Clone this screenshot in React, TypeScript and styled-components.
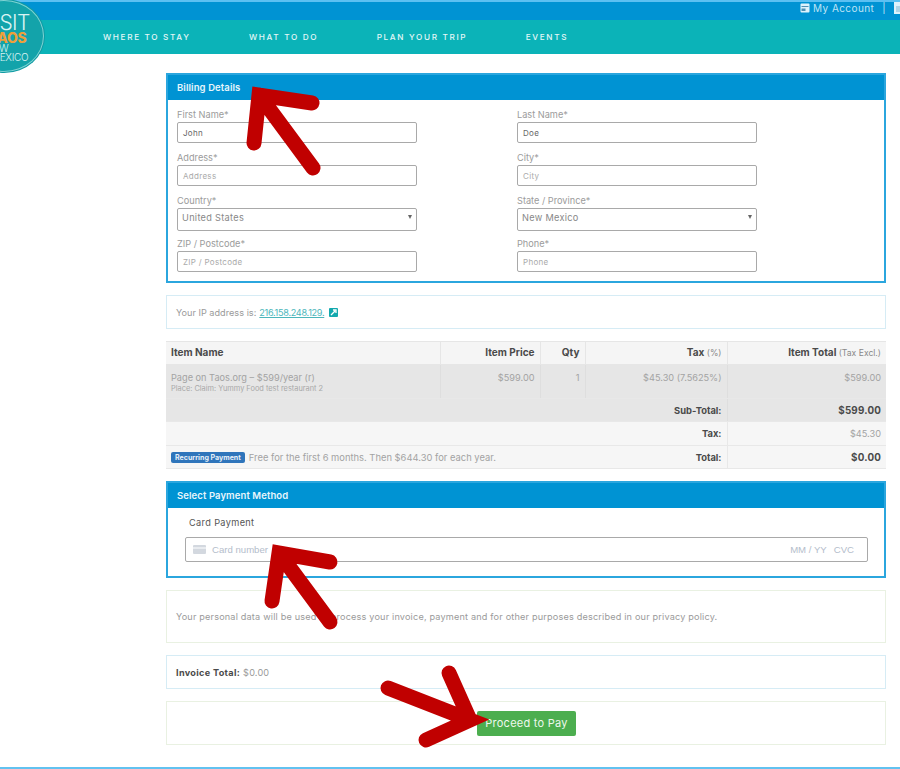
import React from "react";
import styled, { createGlobalStyle } from "styled-components";

const GlobalStyle = createGlobalStyle`
  html, body {
    margin: 0;
    padding: 0;
    background: #fff;
    overflow: hidden;
  }
  * { box-sizing: border-box; }
  body {
    font-family: "Inter", "Open Sans", sans-serif;
    color: #999;
  }
`;

const Page = styled.div`
  position: relative;
  width: 900px;
  height: 769px;
  overflow: hidden;
  display: flex;
  flex-direction: column;
`;

const TopBar = styled.div`
  height: 20px;
  flex: none;
  background: #0093d3;
  border-top: 2px solid #5cc0f2;
  display: flex;
  justify-content: flex-end;
  align-items: flex-start;
  gap: 8px;
  margin-right: -4px;
  color: #bfe4f5;
  font-size: 10px;
  line-height: 12px;
  letter-spacing: 0.42px;
`;

const AccountLink = styled.span`
  display: flex;
  align-items: center;
  gap: 3px;
`;

const NavBar = styled.nav`
  height: 34px;
  flex: none;
  background: #0bb3b8;
  display: flex;
  align-items: center;
  gap: 58.5px;
  padding-left: 103px;
`;

const NavItem = styled.a`
  color: #e4f7f7;
  font-size: 8.2px;
  font-weight: 500;
  letter-spacing: 1.65px;
  white-space: nowrap;
`;

const Logo = styled.div`
  position: absolute;
  left: -36px;
  top: 0;
  width: 80px;
  height: 72px;
  border-radius: 50%;
  background: #13a3aa;
  border: 1px solid #7fd3d3;
  box-shadow: 0 0 0 1px #0f9aa3;
  color: #d9f3f3;
  padding: 12px 0 0 16px;
  display: flex;
  flex-direction: column;
  font-weight: 300;
`;

const LogoVisit = styled.span`
  font-size: 21px;
  line-height: 19px;
  letter-spacing: -0.6px;
`;

const LogoTaos = styled.span`
  font-size: 14px;
  line-height: 12px;
  font-weight: 800;
  letter-spacing: -0.2px;
  color: #eea03a;
  margin-left: 8px;
`;

const LogoSmall = styled.span<{ $indent: number }>`
  font-size: 10px;
  line-height: 8.5px;
  letter-spacing: -0.3px;
  margin-left: ${(p) => p.$indent}px;
`;

const Main = styled.main`
  width: 720px;
  margin: 19px 0 0 166px;
  display: flex;
  flex-direction: column;
  gap: 12px;
`;

const Panel = styled.section<{ $height: number }>`
  height: ${(p) => p.$height}px;
  border: 2px solid #2ba6de;
  display: flex;
  flex-direction: column;
`;

const PanelHeader = styled.h2`
  margin: 0;
  height: 25px;
  flex: none;
  background: #0093d3;
  color: #e8f6fc;
  font-size: 9.5px;
  font-weight: 600;
  line-height: 25px;
  padding-left: 9px;
  letter-spacing: 0.1px;
`;

const FieldGrid = styled.div`
  display: grid;
  grid-template-columns: 240px 240px;
  column-gap: 100px;
  padding: 8px 0 0 9px;
`;

const Field = styled.label`
  display: flex;
  flex-direction: column;
  height: 43px;
`;

const FieldLabel = styled.span`
  font-size: 9.2px;
  line-height: 13px;
  color: #9b9b9b;
`;

const InputBox = styled.span<{ $filled?: boolean; $select?: boolean }>`
  position: relative;
  height: ${(p) => (p.$select ? 23 : 21)}px;
  margin-top: 1px;
  border: 1px solid #a9a9a9;
  border-radius: 2px;
  background: #fff;
  padding-left: ${(p) => (p.$select ? 4 : 5)}px;
  padding-bottom: ${(p) => (p.$select ? 5 : 0)}px;
  display: flex;
  align-items: center;
  color: ${(p) => (p.$select ? "#888" : p.$filled ? "#666" : "#aaa")};
  font-size: ${(p) => (p.$select ? 9.2 : 8)}px;
  letter-spacing: 0.3px;
`;

const Caret = styled.i`
  position: absolute;
  right: 4px;
  top: 6px;
  border-left: 2.5px solid transparent;
  border-right: 2.5px solid transparent;
  border-top: 4px solid #666;
`;

const InfoBox = styled.div<{ $height: number; $tone: "blue" | "green" }>`
  height: ${(p) => p.$height}px;
  border: 1px solid ${(p) => (p.$tone === "blue" ? "#d6ecf5" : "#e9f1e2")};
  display: flex;
  align-items: center;
  padding-left: 9px;
  font-size: 9.15px;
  letter-spacing: 0.18px;
  color: #9a9a9a;
`;

const IpLabel = styled.span`
  letter-spacing: 0.02px;
`;

const IpLink = styled.a`
  color: #4cb6bb;
  text-decoration: underline;
  margin: 0 5px 0 3px;
  letter-spacing: -0.3px;
`;

const ExternalIcon = styled.svg`
  width: 9px;
  height: 9px;
  flex: none;
`;

const Invoice = styled.table`
  width: 100%;
  border-collapse: collapse;
  table-layout: fixed;
  font-size: 9.2px;
  color: #a0a0a0;
`;

const HeadCell = styled.th<{ $right?: boolean }>`
  height: 23px;
  padding: 0 5px 2px;
  background: #f5f5f5;
  border: 1px solid #e6e6e6;
  border-width: 1px 1px 1px 0;
  text-align: ${(p) => (p.$right ? "right" : "left")};
  color: #4a4a4a;
  font-weight: 700;
  font-size: 10px;
  &:first-child { border-left: 0; }
  &:last-child { border-right: 0; }
`;

const HeadNote = styled.span`
  font-weight: 400;
  color: #888;
  font-size: 8.6px;
`;

const Cell = styled.td<{ $right?: boolean; $shade?: boolean; $bold?: boolean; $top?: boolean; $open?: boolean }>`
  padding: ${(p) => (p.$top ? "7px 5px 0" : "0 5px")};
  vertical-align: ${(p) => (p.$top ? "top" : "middle")};
  text-align: ${(p) => (p.$right ? "right" : "left")};
  background: ${(p) => (p.$shade ? "#e6e6e6" : "#f6f6f6")};
  border-bottom: 1px solid #e8e8e8;
  border-right: 1px solid ${(p) => (p.$open ? "transparent" : p.$shade ? "#dedede" : "#e8e8e8")};
  color: ${(p) => (p.$bold ? "#4a4a4a" : "#a3a3a3")};
  font-weight: ${(p) => (p.$bold ? 700 : 400)};
  font-size: ${(p) => (p.$bold ? 9.4 : 9.2)}px;
  &:last-child { border-right: 0; }
`;

const SumValue = styled.span`
  font-size: 9.8px;
  letter-spacing: 0.2px;
`;

const ItemRow = styled.tr`
  height: 34px;
`;

const SumRow = styled.tr<{ $height: number }>`
  height: ${(p) => p.$height}px;
`;

const ItemSub = styled.div`
  font-size: 7.4px;
  margin-top: 1px;
  color: #a8a8a8;
`;

const RecurringBadge = styled.span`
  display: inline-block;
  background: #2f75bb;
  color: #e6eff8;
  border-radius: 2px;
  font-size: 7.05px;
  font-weight: 700;
  line-height: 11px;
  padding: 0 4px;
  margin-right: 4px;
  vertical-align: 1px;
`;

const RecurringNote = styled.span`
  font-size: 9.4px;
`;

const CardTitle = styled.div`
  font-size: 9.2px;
  line-height: 13px;
  color: #555;
  letter-spacing: 0.35px;
  margin: 8px 0 0 21px;
`;

const CardInput = styled.div`
  width: 683px;
  height: 25px;
  margin: 8px 0 0 17px;
  border: 1px solid #a9a9a9;
  border-radius: 2px;
  display: flex;
  align-items: center;
  padding: 0 13px 0 7px;
  font-family: "Liberation Sans", Arial, sans-serif;
  font-size: 9.6px;
  color: #b4bdcb;
`;

const CardIcon = styled.svg`
  width: 13px;
  height: 9px;
  margin-right: 6px;
`;

const CardSpacer = styled.span`
  flex: 1;
`;

const CardExpiry = styled.span`
  margin-right: 7px;
`;

const InvoiceTotalLabel = styled.strong`
  color: #4a4a4a;
  font-weight: 700;
  letter-spacing: 0.32px;
  margin-right: 3px;
`;

const PayBox = styled(InfoBox)`
  justify-content: center;
  padding-left: 1px;
`;

const PayButton = styled.button`
  width: 99px;
  height: 25px;
  border: 0;
  border-radius: 2px;
  background: #4cae4f;
  color: #eef8ee;
  font-family: inherit;
  font-size: 11px;
  letter-spacing: 0.25px;
  padding: 0;
  font-weight: 400;
`;

const FooterLine = styled.div`
  height: 2px;
  margin-top: auto;
  flex: none;
  background: #62c2f0;
`;

const ArrowSvg = styled.svg`
  position: absolute;
  left: 0;
  top: 0;
  pointer-events: none;
`;

const Arrow = ({ d }: { d: string }) => (
  <ArrowSvg width="900" height="769" viewBox="0 0 900 769">
    <path d={d} fill="none" stroke="#c00000" strokeWidth="15" strokeLinecap="round" strokeLinejoin="miter" />
  </ArrowSvg>
);

const Input = ({ label, value, placeholder }: { label: string; value?: string; placeholder?: string }) => (
  <Field>
    <FieldLabel>{label}</FieldLabel>
    <InputBox $filled={!!value}>{value || placeholder}</InputBox>
  </Field>
);

const Select = ({ label, value }: { label: string; value: string }) => (
  <Field>
    <FieldLabel>{label}</FieldLabel>
    <InputBox $select>
      {value}
      <Caret />
    </InputBox>
  </Field>
);

function App(): React.ReactElement {
  return (
    <Page>
      <GlobalStyle />
      <TopBar>
        <AccountLink>
          <svg width="10" height="10" viewBox="0 0 10 10">
            <rect x="0.5" y="0.5" width="9" height="9" rx="1" fill="#dff2fb" />
            <rect x="1.5" y="3" width="7" height="1" fill="#4f8fb3" />
            <rect x="1.5" y="5.5" width="4" height="2.5" fill="#4f8fb3" />
          </svg>
          My Account
        </AccountLink>
        <span>|</span>
        <svg width="10" height="12" viewBox="0 0 10 12">
          <path d="M0 0h7l3 3v9H0z" fill="#dff2fb" />
          <path d="M2 5h6M2 7h6M2 9h4" stroke="#7fb6d3" strokeWidth="1" />
        </svg>
      </TopBar>
      <NavBar>
        <NavItem>WHERE TO STAY</NavItem>
        <NavItem>WHAT TO DO</NavItem>
        <NavItem>PLAN YOUR TRIP</NavItem>
        <NavItem>EVENTS</NavItem>
      </NavBar>
      <Logo>
        <LogoVisit>VISIT</LogoVisit>
        <LogoTaos>TAOS</LogoTaos>
        <LogoSmall $indent={5}>NEW</LogoSmall>
        <LogoSmall $indent={10}>MEXICO</LogoSmall>
      </Logo>

      <Main>
        <Panel $height={210}>
          <PanelHeader>Billing Details</PanelHeader>
          <FieldGrid>
            <Input label="First Name*" value="John" />
            <Input label="Last Name*" value="Doe" />
            <Input label="Address*" placeholder="Address" />
            <Input label="City*" placeholder="City" />
            <Select label="Country*" value="United States" />
            <Select label="State / Province*" value="New Mexico" />
            <Input label="ZIP / Postcode*" placeholder="ZIP / Postcode" />
            <Input label="Phone*" placeholder="Phone" />
          </FieldGrid>
        </Panel>

        <InfoBox $height={34} $tone="blue">
          <IpLabel>Your IP address is:</IpLabel>
          <IpLink>216.158.248.129.</IpLink>
          <ExternalIcon viewBox="0 0 9 9">
            <rect width="9" height="9" rx="1" fill="#13a9ae" />
            <path d="M2 7l4-4M4 2h3v3" stroke="#fff" strokeWidth="1.3" fill="none" />
          </ExternalIcon>
        </InfoBox>

        <Invoice>
          <colgroup>
            <col width="274" />
            <col width="100" />
            <col width="45" />
            <col width="142" />
            <col width="159" />
          </colgroup>
          <thead>
            <tr>
              <HeadCell>Item Name</HeadCell>
              <HeadCell $right>Item Price</HeadCell>
              <HeadCell $right>Qty</HeadCell>
              <HeadCell $right>
                Tax <HeadNote>(%)</HeadNote>
              </HeadCell>
              <HeadCell $right>
                Item Total <HeadNote>(Tax Excl.)</HeadNote>
              </HeadCell>
            </tr>
          </thead>
          <tbody>
            <ItemRow>
              <Cell $shade $top>
                Page on Taos.org – $599/year (r)
                <ItemSub>Place: Claim: Yummy Food test restaurant 2</ItemSub>
              </Cell>
              <Cell $shade $top $right>$599.00</Cell>
              <Cell $shade $top $right>1</Cell>
              <Cell $shade $top $right>$45.30 (7.5625%)</Cell>
              <Cell $shade $top $right>$599.00</Cell>
            </ItemRow>
            <SumRow $height={23}>
              <Cell $shade $right $bold colSpan={4}>Sub-Total:</Cell>
              <Cell $shade $right $bold><SumValue>$599.00</SumValue></Cell>
            </SumRow>
            <SumRow $height={24}>
              <Cell $right $bold colSpan={4}>Tax:</Cell>
              <Cell $right>$45.30</Cell>
            </SumRow>
            <SumRow $height={23}>
              <Cell colSpan={3} $open>
                <RecurringBadge>Recurring Payment</RecurringBadge>
                <RecurringNote>Free for the first 6 months. Then $644.30 for each year.</RecurringNote>
              </Cell>
              <Cell $right $bold>Total:</Cell>
              <Cell $right $bold><SumValue>$0.00</SumValue></Cell>
            </SumRow>
          </tbody>
        </Invoice>

        <Panel $height={97}>
          <PanelHeader>Select Payment Method</PanelHeader>
          <CardTitle>Card Payment</CardTitle>
          <CardInput>
            <CardIcon viewBox="0 0 13 9">
              <rect width="13" height="9" rx="1" fill="#d3d8df" />
              <rect y="2" width="13" height="2" fill="#e9ecf0" />
            </CardIcon>
            Card number
            <CardSpacer />
            <CardExpiry>MM / YY</CardExpiry>
            CVC
          </CardInput>
        </Panel>

        <InfoBox $height={53} $tone="green">
          Your personal data will be used to process your invoice, payment and for other purposes described in our privacy policy.
        </InfoBox>

        <InfoBox $height={34} $tone="blue">
          <InvoiceTotalLabel>Invoice Total:</InvoiceTotalLabel>
          $0.00
        </InfoBox>

        <PayBox $height={44} $tone="green">
          <PayButton>Proceed to Pay</PayButton>
        </PayBox>
      </Main>

      <FooterLine />

      <Arrow d="M254 143L259 95L312 103M259 95L313 168" />
      <Arrow d="M272 601L279 553L330 562M279 553L330 622" />
      <Arrow d="M388 688L470 720L426 740M470 720L449 673" />
    </Page>
  );
}

export default App;
